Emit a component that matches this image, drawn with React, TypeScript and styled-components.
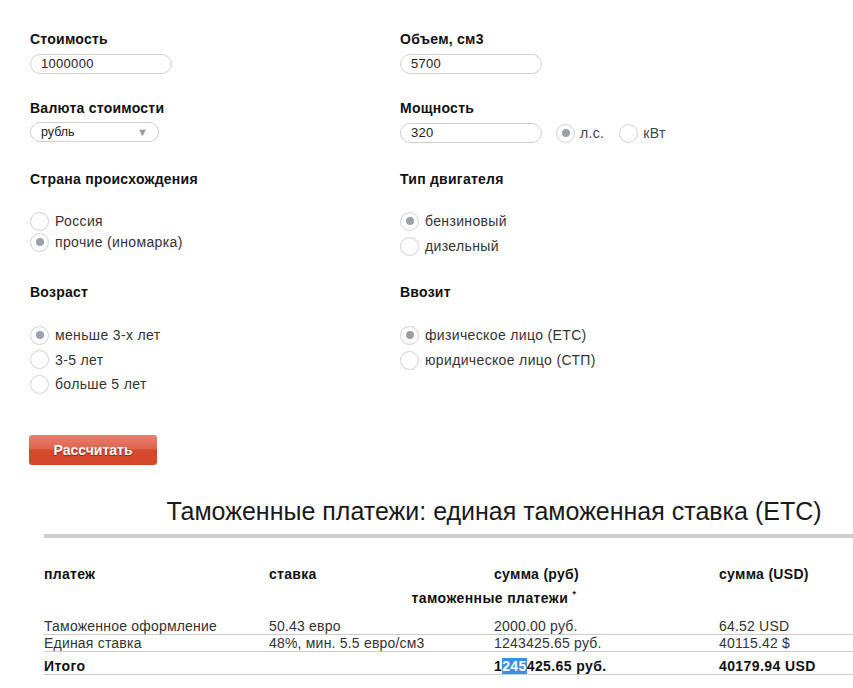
import styled, { createGlobalStyle } from 'styled-components';

const GlobalStyle = createGlobalStyle`
  html, body {
    margin: 0;
    padding: 0;
    background: #ffffff;
  }
  body {
    font-family: "Liberation Sans", Arial, sans-serif;
    color: #222222;
    overflow: hidden;
  }
`;

interface IRadioOption {
  label: string;
  checked?: boolean;
}

const countryOptions: IRadioOption[] = [
  { label: 'Россия' },
  { label: 'прочие (иномарка)', checked: true },
];

const engineOptions: IRadioOption[] = [
  { label: 'бензиновый', checked: true },
  { label: 'дизельный' },
];

const ageOptions: IRadioOption[] = [
  { label: 'меньше 3-х лет', checked: true },
  { label: '3-5 лет' },
  { label: 'больше 5 лет' },
];

const importerOptions: IRadioOption[] = [
  { label: 'физическое лицо (ЕТС)', checked: true },
  { label: 'юридическое лицо (СТП)' },
];

const paymentRows = [
  {
    name: 'Таможенное оформление',
    rate: '50.43 евро',
    rub: '2000.00 руб.',
    usd: '64.52 USD',
  },
  {
    name: 'Единая ставка',
    rate: '48%, мин. 5.5 евро/см3',
    rub: '1243425.65 руб.',
    usd: '40115.42 $',
  },
];

// offset = distance from the label bottom to the centre of the first row
const RadioList = ({
  options,
  rowHeight,
  offset,
}: {
  options: IRadioOption[];
  rowHeight: number;
  offset: number;
}): React.ReactElement => (
  <RadioGroup $top={offset - rowHeight / 2}>
    {options.map(option => (
      <RadioRow key={option.label} $height={rowHeight}>
        <RadioCircle $checked={option.checked} />
        <RadioText>{option.label}</RadioText>
      </RadioRow>
    ))}
  </RadioGroup>
);

const App = (): React.ReactElement => {
  return (
    <Page>
      <GlobalStyle />
      <FormGrid>
        <Field>
          <FieldLabel>Стоимость</FieldLabel>
          <TextInput $gap={6}>1000000</TextInput>
        </Field>
        <Field>
          <FieldLabel>Объем, см3</FieldLabel>
          <TextInput $gap={6}>5700</TextInput>
        </Field>

        <Field>
          <FieldLabel>Валюта стоимости</FieldLabel>
          <SelectBox>
            <span>рубль</span>
            <SelectArrow>▼</SelectArrow>
          </SelectBox>
        </Field>
        <Field>
          <FieldLabel>Мощность</FieldLabel>
          <PowerRow>
            <TextInput $gap={0}>320</TextInput>
            <InlineRadio>
              <RadioCircle $checked />
              <InlineText>л.с.</InlineText>
            </InlineRadio>
            <InlineRadio>
              <RadioCircle />
              <InlineText>кВт</InlineText>
            </InlineRadio>
          </PowerRow>
        </Field>

        <Field>
          <FieldLabel>Страна происхождения</FieldLabel>
          <RadioList options={countryOptions} rowHeight={21} offset={33} />
        </Field>
        <Field>
          <FieldLabel>Тип двигателя</FieldLabel>
          <RadioList options={engineOptions} rowHeight={25} offset={33} />
        </Field>

        <Field>
          <FieldLabel>Возраст</FieldLabel>
          <RadioList options={ageOptions} rowHeight={24.5} offset={34} />
        </Field>
        <Field>
          <FieldLabel>Ввозит</FieldLabel>
          <RadioList options={importerOptions} rowHeight={25} offset={34} />
        </Field>
      </FormGrid>

      <CalcButton type="button">Рассчитать</CalcButton>

      <Results>
        <ResultsTitle>
          Таможенные платежи: единая таможенная ставка (ЕТС)
        </ResultsTitle>
        <TitleBar />
        <PaymentTable>
          <colgroup>
            <col />
            <col />
            <col />
            <col />
          </colgroup>
          <thead>
            <tr>
              <HeadCell>платеж</HeadCell>
              <HeadCell>ставка</HeadCell>
              <HeadCell>сумма (руб)</HeadCell>
              <HeadCell>сумма (USD)</HeadCell>
            </tr>
          </thead>
          <tbody>
            <tr>
              <SectionCell colSpan={4}>
                таможенные платежи <sup>*</sup>
              </SectionCell>
            </tr>
            {paymentRows.map(row => (
              <tr key={row.name}>
                <BodyCell>{row.name}</BodyCell>
                <BodyCell>{row.rate}</BodyCell>
                <BodyCell>{row.rub}</BodyCell>
                <BodyCell>{row.usd}</BodyCell>
              </tr>
            ))}
            <tr>
              <TotalCell>Итого</TotalCell>
              <TotalCell />
              <TotalCell>
                1<Selected>245</Selected>425.65 руб.
              </TotalCell>
              <TotalCell>40179.94 USD</TotalCell>
            </tr>
          </tbody>
        </PaymentTable>
      </Results>
    </Page>
  );
};

export default App;

const Page = styled.main`
  width: 853px;
  height: 688px;
  padding: 30px 0 0 30px;
  box-sizing: border-box;
`;

const FormGrid = styled.div`
  display: grid;
  grid-template-columns: 370px 1fr;
  grid-template-rows: 69px 71px 113px 113px;
`;

const Field = styled.div`
  display: flex;
  flex-direction: column;
  align-items: flex-start;
`;

const FieldLabel = styled.div`
  height: 18px;
  line-height: 18px;
  font-size: 14px;
  font-weight: 700;
  letter-spacing: 0.25px;
  color: #111111;
`;

const TextInput = styled.div<{ $gap: number }>`
  margin-top: ${({ $gap }) => $gap}px;
  width: 142px;
  height: 20px;
  box-sizing: border-box;
  padding: 0 10px;
  border: 1px solid #cfcfcf;
  border-radius: 10px;
  font-size: 13px;
  line-height: 18px;
  letter-spacing: 0.3px;
  color: #222222;
  background: #ffffff;
`;

const SelectBox = styled.div`
  margin-top: 5px;
  width: 129px;
  height: 20px;
  box-sizing: border-box;
  padding: 0 10px 0 10px;
  display: flex;
  align-items: center;
  justify-content: space-between;
  border: 1px solid #cfcfcf;
  border-radius: 10px;
  font-size: 12.5px;
  color: #222222;
`;

const SelectArrow = styled.span`
  font-size: 11px;
  line-height: 11px;
  color: #9a9a9a;
`;

const PowerRow = styled.div`
  margin-top: 6px;
  display: flex;
  align-items: center;
`;

const InlineRadio = styled.div`
  display: flex;
  align-items: center;
  gap: 5px;
  margin-left: 14px;

  & + & {
    margin-left: 15px;
  }
`;

const InlineText = styled.span`
  font-size: 14px;
  letter-spacing: 0.35px;
  color: #444444;
`;

const RadioGroup = styled.div<{ $top: number }>`
  margin-top: ${({ $top }) => $top}px;
  display: flex;
  flex-direction: column;
`;

const RadioRow = styled.div<{ $height: number }>`
  height: ${({ $height }) => $height}px;
  display: flex;
  align-items: center;
  gap: 6px;
`;

const RadioCircle = styled.span<{ $checked?: boolean }>`
  width: 19px;
  height: 19px;
  box-sizing: border-box;
  border-radius: 50%;
  border: 1px solid #d2d2d2;
  background: radial-gradient(circle, #ffffff 60%, #f4f4f4 100%);
  display: flex;
  align-items: center;
  justify-content: center;

  &::after {
    content: '';
    width: 8px;
    height: 8px;
    border-radius: 50%;
    background: #9aa1a9;
    display: ${({ $checked }) => ($checked ? 'block' : 'none')};
  }
`;

const RadioText = styled.span`
  font-size: 14px;
  letter-spacing: 0.35px;
  color: #333333;
`;

const CalcButton = styled.button`
  display: block;
  margin: 39px 0 0 -1px;
  width: 128px;
  height: 30px;
  padding: 0;
  border: 0;
  border-radius: 3px;
  background: linear-gradient(
    to bottom,
    #e8806c 0%,
    #df6450 45%,
    #d5492c 50%,
    #d3482b 100%
  );
  font-family: "Liberation Sans", Arial, sans-serif;
  font-size: 14px;
  font-weight: 700;
  color: #ffffff;
  text-shadow: 0 1px 1px rgba(90, 20, 10, 0.7);
  cursor: pointer;
`;

const Results = styled.section`
  margin: 32px 0 0 14px;
  width: 900px;
`;

const ResultsTitle = styled.h2`
  margin: 0;
  font-size: 25px;
  font-weight: 400;
  line-height: 28px;
  text-align: center;
  color: #1a1a1a;
`;

const TitleBar = styled.div`
  margin-top: 9px;
  height: 4px;
  background: #cccccc;
`;

const PaymentTable = styled.table`
  margin-top: 28px;
  width: 900px;
  border-collapse: collapse;
  table-layout: fixed;

  col {
    width: 225px;
  }
`;

const HeadCell = styled.th`
  padding: 0;
  text-align: left;
  font-size: 14px;
  font-weight: 700;
  line-height: 16px;
  letter-spacing: 0.3px;
  color: #111111;
`;

const SectionCell = styled.td`
  padding: 8px 0 12px;
  text-align: center;
  font-size: 14px;
  font-weight: 700;
  line-height: 16px;
  letter-spacing: 0.4px;
  color: #111111;

  sup {
    font-size: 9px;
    vertical-align: top;
    line-height: 8px;
  }
`;

const BodyCell = styled.td`
  padding: 0;
  font-size: 14px;
  line-height: 16px;
  letter-spacing: 0.2px;
  color: #333333;
  border-bottom: 1px solid #cccccc;
  white-space: nowrap;
`;

const TotalCell = styled.td`
  padding: 6px 0 0;
  font-size: 14px;
  font-weight: 700;
  line-height: 16px;
  letter-spacing: 0.4px;
  color: #111111;
  border-bottom: 1px solid #cccccc;
  white-space: nowrap;
`;

const Selected = styled.span`
  background: #3b8fe6;
  color: #ffffff;
`;
